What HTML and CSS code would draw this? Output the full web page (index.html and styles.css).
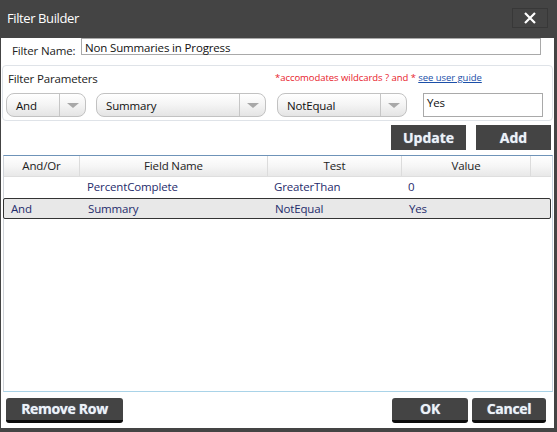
FILE: index.html
```html
<!DOCTYPE html>
<html>
<head>
<meta charset="utf-8">
<link rel="stylesheet" href="styles.css">
</head>
<body>
<div class="dialog">
  <div class="titlebar">
    <span class="title">Filter Builder</span>
    <button class="close" aria-label="Close">
      <svg width="14" height="14" viewBox="0 0 14 14"><path d="M2 2 L12 12 M12 2 L2 12" stroke="#fff" stroke-width="2.2" fill="none"/></svg>
    </button>
  </div>
  <div class="body">
    <div class="name-row">
      <label class="name-label">Filter Name:</label>
      <div class="name-input">Non Summaries in Progress</div>
    </div>
    <div class="params">
      <div class="params-head">
        <span class="params-label">Filter Parameters</span>
        <span class="hint">*accomodates wildcards ? and * <a class="guide">see user guide</a></span>
      </div>
      <div class="params-controls">
        <div class="select sel-andor"><span class="sel-text">And</span><span class="sel-btn"><span class="tri"></span></span></div>
        <div class="select sel-field"><span class="sel-text">Summary</span><span class="sel-btn"><span class="tri"></span></span></div>
        <div class="select sel-test"><span class="sel-text">NotEqual</span><span class="sel-btn"><span class="tri"></span></span></div>
        <div class="value-input">Yes</div>
      </div>
    </div>
    <div class="action-row">
      <button class="flat-btn">Update</button>
      <button class="flat-btn">Add</button>
    </div>
    <div class="grid">
      <div class="grid-head">
        <div class="c c1">And/Or</div>
        <div class="c c2">Field Name</div>
        <div class="c c3">Test</div>
        <div class="c c4">Value</div>
        <div class="c c5"></div>
      </div>
      <div class="grid-row">
        <div class="c c1"></div>
        <div class="c c2">PercentComplete</div>
        <div class="c c3">GreaterThan</div>
        <div class="c c4">0</div>
      </div>
      <div class="grid-row selected">
        <div class="c c1">And</div>
        <div class="c c2">Summary</div>
        <div class="c c3">NotEqual</div>
        <div class="c c4">Yes</div>
      </div>
    </div>
    <div class="footer">
      <button class="btn btn-remove">Remove Row</button>
      <div class="footer-right">
        <button class="btn btn-ok">OK</button>
        <button class="btn btn-cancel">Cancel</button>
      </div>
    </div>
  </div>
</div>
</body>
</html>
```
FILE: styles.css
```css
html, body {
  margin: 0;
  padding: 0;
  background: #fff;
}
body {
  font-family: "Open Sans", "Noto Sans", sans-serif;
  font-size: 11.5px;
  letter-spacing: -0.15px;
}
.dialog {
  width: 557px;
  height: 432px;
  background: #444444;
  display: flex;
  flex-direction: column;
  box-sizing: border-box;
}
.titlebar {
  height: 38px;
  flex: 0 0 38px;
  display: flex;
  align-items: center;
  justify-content: space-between;
  padding: 0 9px 0 7px;
  color: #fff;
  box-sizing: border-box;
}
.title {
  font-size: 13px;
  letter-spacing: -0.4px;
  margin-top: -3px;
}
.close {
  width: 36px;
  height: 20px;
  margin-top: -2px;
  background: #444;
  border: 1px solid #383838;
  padding: 0;
  display: flex;
  align-items: center;
  justify-content: center;
}
.body {
  flex: 1;
  margin: 0 3px 4px 1px;
  background: #fff;
  display: flex;
  flex-direction: column;
}
.name-row {
  display: flex;
  height: 17px;
}
.name-label {
  width: 69px;
  padding-left: 11px;
  padding-top: 5px;
  color: #222;
  line-height: 16px;
  white-space: nowrap;
}
.name-input {
  width: 460px;
  height: 17px;
  box-sizing: border-box;
  border: 1px solid #a9a9a9;
  padding-left: 3px;
  line-height: 17px;
  color: #111;
}
.params {
  margin: 10px 1px 0 1px;
  height: 56px;
  box-sizing: border-box;
  border: 1px solid #dfe3e8;
  border-radius: 4px;
  padding: 0 0 0 3px;
}
.params-head {
  height: 26px;
  display: flex;
  align-items: center;
}
.params-label {
  flex: 0 0 269px;
  padding-left: 2px;
  box-sizing: border-box;
  color: #222;
  margin-top: -1px;
}
.hint {
  font-size: 9.5px;
  letter-spacing: -0.05px;
  color: #e8202a;
  margin-top: -4px;
}
.guide {
  color: #1b4fa8;
  text-decoration: underline;
}
.params-controls {
  display: flex;
  margin-top: 1px;
  height: 24px;
}
.select {
  height: 24px;
  box-sizing: border-box;
  border: 1px solid #c2c2c2;
  border-radius: 8px;
  background: linear-gradient(#ffffff, #f4f4f4 50%, #e4e4e4);
  display: flex;
  align-items: center;
  color: #111;
}
.sel-text {
  flex: 1;
  padding-left: 9px;
}
.sel-btn {
  height: 100%;
  border-left: 1px solid #c6c6c6;
  display: flex;
  align-items: center;
  justify-content: center;
  width: 25px;
}
.tri {
  width: 0;
  height: 0;
  border-left: 6px solid transparent;
  border-right: 6px solid transparent;
  border-top: 5px solid #a8a8a8;
  margin-top: 1px;
}
.sel-andor { width: 80px; }
.sel-field { width: 170px; margin-left: 10px; }
.sel-test { width: 130px; margin-left: 11px; }
.value-input {
  width: 120px;
  height: 24px;
  margin-left: 16px;
  box-sizing: border-box;
  border: 1px solid #a9a9a9;
  padding: 1px 0 0 3px;
  color: #111;
}
.action-row {
  display: flex;
  justify-content: flex-end;
  gap: 10px;
  margin: 4px 3px 0 0;
  height: 25px;
}
.flat-btn {
  width: 75px;
  height: 25px;
  background: #444;
  border: none;
  color: #eef2f6;
  font-family: "Open Sans", "Noto Sans", sans-serif;
  font-weight: bold;
  font-size: 14px;
  text-shadow: 0 0 1px #9bb8d8;
  padding: 0;
}
.grid {
  flex: 1;
  margin: 5px 1px 0 2px;
  border-top: 1px solid #6e93b8;
  border-left: 1px solid #cfd3d8;
  border-right: 1px solid #c8d4e0;
  border-bottom: 1px solid #a9d3e8;
  display: flex;
  flex-direction: column;
}
.grid-head {
  display: flex;
  height: 20px;
  background: linear-gradient(#ffffff, #f6f6f6 50%, #e8e8e8);
  border-bottom: 1px solid #dedede;
  margin-right: 1px;
  color: #222;
}
.grid-head .c {
  text-align: center;
  line-height: 20px;
  border-right: 1px solid #dcdcdc;
  box-sizing: border-box;
}
.grid-head .c5 { border-right: none; }
.c1 { width: 76px; }
.c2 { width: 188px; }
.c3 { width: 134px; }
.c4 { width: 129px; }
.c5 { flex: 1; }
.grid-row {
  display: flex;
  height: 21px;
  color: #1f2c6c;
  box-sizing: border-box;
}
.grid-row .c {
  padding-left: 7px;
  line-height: 20px;
  box-sizing: border-box;
}
.grid-row .c3, .grid-row .c4 { padding-left: 6px; }
.grid-row.selected {
  margin-left: -1px;
  margin-right: 1px;
  border: 1px solid #333;
  border-radius: 2px;
  background: #e8e8e8;
}
.grid-row.selected .c1 { width: 77px; }
.grid-row.selected .c { line-height: 19px; }
.footer {
  display: flex;
  justify-content: space-between;
  margin: 6px 8px 5px 5px;
  height: 25px;
}
.footer-right {
  display: flex;
  gap: 4px;
}
.btn {
  height: 25px;
  background: #444;
  border: none;
  border-bottom: 3px solid #0c0c0c;
  border-radius: 3px;
  color: #eef2f6;
  font-family: "Open Sans", "Noto Sans", sans-serif;
  font-weight: bold;
  font-size: 14px;
  letter-spacing: -0.3px;
  text-shadow: 0 0 1px #9bb8d8;
  padding: 0 0 1px 0;
  box-sizing: border-box;
}
.btn-remove { width: 117px; }
.btn-ok { width: 76px; }
.btn-cancel { width: 74px; }
```
